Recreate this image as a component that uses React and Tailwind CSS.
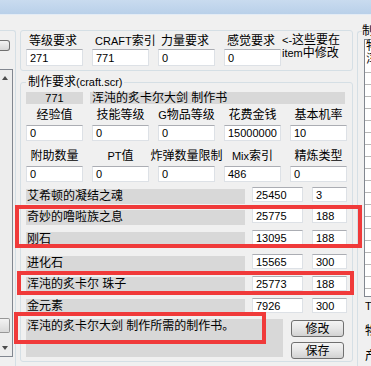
import React from 'react';

// 物品制作书编辑对话框（截图局部）
const topFields = [
  { label: '等级要求', value: '271' },
  { label: <><span className="text-[11px]">CRAFT</span>索引</>, value: '771' },
  { label: '力量要求', value: '0' },
  { label: '感觉要求', value: '0' },
];

const row1 = [
  { label: '经验值', value: '0' },
  { label: '技能等级', value: '0' },
  { label: <><span className="text-[11px]">G</span>物品等级</>, value: '0' },
  { label: '花费金钱', value: '15000000' },
  { label: '基本机率', value: '10' },
];

const row2 = [
  { label: '附助数量', value: '0' },
  { label: <><span className="text-[11px]">PT</span>值</>, value: '0' },
  { label: '炸弹数量限制', value: '0' },
  { label: <><span className="text-[11px]">Mix</span>索引</>, value: '486' },
  { label: '精炼类型', value: '0' },
];

const items = [
  { name: '艾希顿的凝结之魂', a: '25450', b: '3', h: 'h-[21px]', bar: 'mt-[2px]' },
  { name: '奇妙的噜啦族之息', a: '25775', b: '188', h: 'h-[22px]', bar: 'mt-[2px]' },
  { name: '刚石', a: '13095', b: '188', h: 'h-[24px]', bar: 'mt-[2px]' },
  { name: '进化石', a: '15565', b: '300', h: 'h-[22px]', bar: 'mt-[2px]' },
  { name: '浑沌的炙卡尔 珠子', a: '25773', b: '188', h: 'h-[22px]', bar: 'mt-[1px]' },
  { name: '金元素', a: '7926', b: '300', h: 'h-[21px]', bar: 'mt-[1px]' },
];

function Field({ value, className = '' }) {
  return (
    <div className={`bg-white border border-[#dde1e6] border-t-[#abadb3] pl-[3px] text-[11px] leading-[14px] flex items-center ${className}`}>
      {value}
    </div>
  );
}

function WinButton({ children, className = '' }) {
  return (
    <div className={`h-[17px] border border-[#707070] rounded-[3px] bg-linear-to-b from-[#f4f4f4] via-[#e6e6e6] to-[#d2d2d2] flex items-center justify-center leading-[14px] ${className}`}>
      {children}
    </div>
  );
}

function LeftStrip() {
  return (
    <div className="w-[16px] shrink-0 mt-[15px] border-t border-r border-[#d5dfe5] rounded-tr-[3px]">
      <div className="mt-[9px] w-[10px] h-[11px] border border-l-0 border-[#707070] rounded-r-[3px] bg-linear-to-b from-[#f2f2f2] to-[#d6d6d6]" />
      <div className="mt-[18px] w-[13px] h-[288px] border border-l-0 border-[#828790] bg-[#ededed] flex flex-col">
        <div className="h-[16px] flex items-center pl-[2px]">
          <svg width="6" height="4" viewBox="0 0 6 4"><path d="M0 4 L3 0 L6 4 Z" fill="#4d4d4d" /></svg>
        </div>
        <div className="flex-1" />
        <div className="w-[10px] h-[15px] border border-l-0 border-[#979797] rounded-r-[2px] bg-linear-to-b from-[#f3f3f3] to-[#d9d9d9]" />
        <div className="mt-[7px] h-[16px] flex items-center pl-[2px]">
          <svg width="6" height="4" viewBox="0 0 6 4"><path d="M0 0 L3 4 L6 0 Z" fill="#4d4d4d" /></svg>
        </div>
      </div>
    </div>
  );
}

function RightPanel() {
  return (
    <fieldset className="ml-[4px] mt-[9px] flex-1 min-w-0 border-l border-t border-[#d5dfe5] rounded-tl-[3px] pl-[4px] pt-[1px]">
      <legend className="px-0 leading-[14px] whitespace-nowrap">制作列表</legend>
      <div className="ml-[2px] w-[200px] h-[258px] border border-[#828790] bg-white whitespace-nowrap">
        <div className="h-[13px] leading-[13px] pl-[1px]">物品名称</div>
        <div className="h-[13px] leading-[13px] pl-[1px]">浑沌的炙卡尔大剑 制作书</div>
        <div className="mt-[6px]">
          {Array.from({ length: 19 }).map((_, i) => (
            <div key={i} className="h-[12px] border-t border-[#b8b8b8]" />
          ))}
        </div>
      </div>
      <div className="ml-[3px] mt-[2px] leading-[14px] whitespace-nowrap"><span className="text-[11px]">T</span>ype</div>
      <div className="ml-[3px] mt-[11px] leading-[14px] whitespace-nowrap">物品</div>
      <div className="ml-[3px] mt-[11px] leading-[14px] whitespace-nowrap">产品</div>
    </fieldset>
  );
}

export default function App() {
  return (
    <div className="relative w-[371px] h-[366px] overflow-hidden bg-[#f0f0f0] text-black text-[12px] font-['Liberation_Sans','Noto_Sans_CJK_SC',sans-serif]">
      <div className="h-[14px] bg-linear-to-b from-[#c9dbef] to-[#b9d0e9]" />
      <div className="h-px bg-[#e4ecf5]" />
      <div className="flex h-[351px]">
        <LeftStrip />

        <div className="ml-[4px] w-[333px] shrink-0">
          {/* 基本要求 */}
          <div className="mt-[15px] h-[41px] border border-[#d5dfe5] rounded-[3px] pl-[5px] pt-[3px] flex">
            <div className="grid grid-cols-[57px_57px_57px_57px] gap-x-[9px]">
              {topFields.map((f, i) => (
                <div key={i}>
                  <div className="h-[14px] leading-[14px] pl-[3px] whitespace-nowrap">{f.label}</div>
                  <Field value={f.value} className="mt-[1px] h-[17px]" />
                </div>
              ))}
            </div>
            <div className="ml-[1px] leading-[13px] whitespace-nowrap">
              <div><span className="text-[11px]">&lt;-</span>这些要在</div>
              <div><span className="text-[11px]">item</span>中修改</div>
            </div>
          </div>

          {/* 制作要求 */}
          <fieldset className="mt-[4px] h-[287px] border border-[#d5dfe5] rounded-[3px] pl-[5px] pr-[4px] pt-[3px] pb-[2px]">
            <legend className="px-[2px] leading-[14px] whitespace-nowrap">制作要求<span className="text-[11px]">(craft.scr)</span></legend>

            <div className="flex h-[12px] leading-[12px]">
              <div className="w-[57px] bg-[#d8d8d8] text-center text-[11px]">771</div>
              <div className="ml-[7px] w-[255px] bg-[#d8d8d8] pl-[2px] whitespace-nowrap">浑沌的炙卡尔大剑 制作书</div>
            </div>

            <div className="mt-[4px] grid grid-cols-[57px_57px_57px_57px_57px] gap-x-[9px]">
              {row1.map((f, i) => (
                <div key={i}>
                  <div className="h-[14px] leading-[14px] flex justify-center whitespace-nowrap">{f.label}</div>
                  <Field value={f.value} className="mt-[3px] h-[16px]" />
                </div>
              ))}
            </div>

            <div className="mt-[8px] grid grid-cols-[57px_57px_57px_57px_57px] gap-x-[9px]">
              {row2.map((f, i) => (
                <div key={i}>
                  <div className="h-[14px] leading-[14px] flex justify-center whitespace-nowrap">{f.label}</div>
                  <Field value={f.value} className="mt-[3px] h-[16px]" />
                </div>
              ))}
            </div>

            <div className="mt-[5px]">
              {items.map((it, i) => (
                <div key={i} className={`flex items-start ${it.h}`}>
                  <div className={`w-[219px] h-[15px] bg-[#d8d8d8] pl-[1px] leading-[15px] whitespace-nowrap ${it.bar}`}>{it.name}</div>
                  <Field value={it.a} className="ml-[7px] w-[51px] h-[15px]" />
                  <Field value={it.b} className="ml-[9px] w-[35px] h-[15px]" />
                </div>
              ))}
            </div>

            <div className="flex h-[40px]">
              <div className="w-[257px] h-[38px] bg-[#d8d8d8] pl-[1px] leading-[14px] whitespace-nowrap">浑沌的炙卡尔大剑 制作所需的制作书。</div>
              <div className="ml-[8px] w-[53px]">
                <WinButton className="mt-[1px]">修改</WinButton>
                <WinButton className="mt-[5px]">保存</WinButton>
              </div>
            </div>
          </fieldset>
        </div>

        <RightPanel />
      </div>

      {/* 红色标注框 */}
      <div className="absolute left-[15px] top-[205px] w-[347px] h-[43px] border-[4px] border-[#f03a3a] pointer-events-none" />
      <div className="absolute left-[17px] top-[271px] w-[337px] h-[24px] border-[4px] border-[#f03a3a] pointer-events-none" />
      <div className="absolute left-[14px] top-[312px] w-[252px] h-[32px] border-[4px] border-[#f03a3a] pointer-events-none" />
    </div>
  );
}
